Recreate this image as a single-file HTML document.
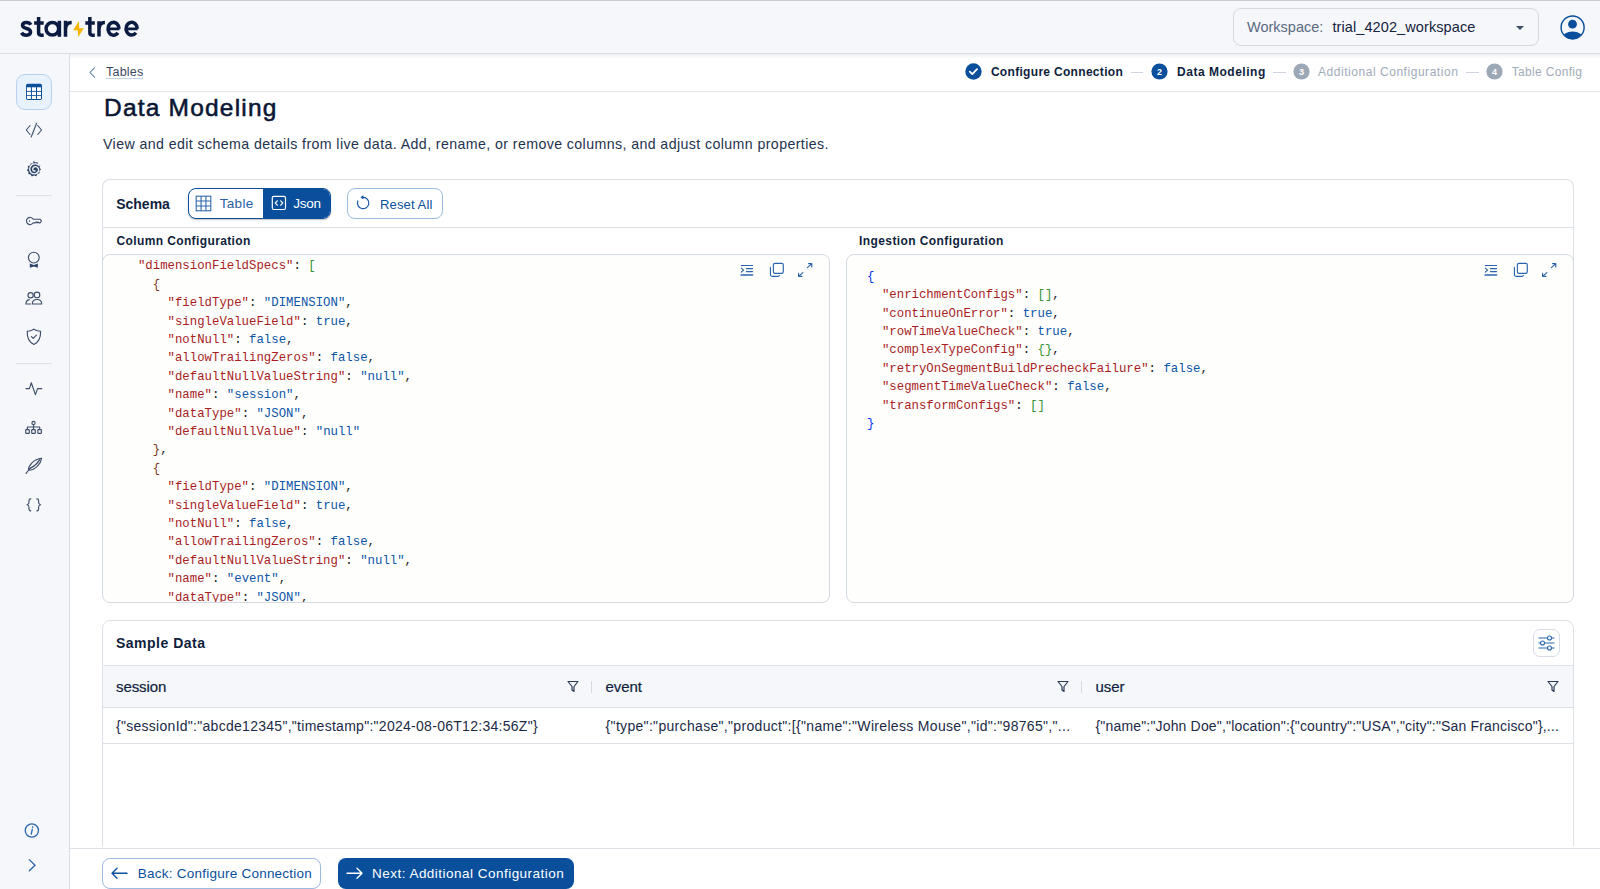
<!DOCTYPE html>
<html><head><meta charset="utf-8">
<style>
*{box-sizing:border-box;margin:0;padding:0}
html,body{width:1600px;height:889px;overflow:hidden;background:#fff;font-family:"Liberation Sans",sans-serif;color:#0f1e3d}
.a{position:absolute}
.t{position:absolute;white-space:nowrap;line-height:1}
.ic{position:absolute;fill:none;stroke:#3d4b68;stroke-width:1.3;stroke-linecap:round;stroke-linejoin:round}
.k{color:#a91d1d}.s{color:#0d56a8}.b1{color:#0431fa}.b2{color:#319331}.b3{color:#7b3814}
.code{position:absolute;font-family:"Liberation Mono",monospace;font-size:12.35px;line-height:18.4px;white-space:pre;color:#1a1a1a}
</style></head>
<body>
<div class="a" style="left:0;top:0;width:1600px;height:1px;background:#c9cbce"></div>
<div class="a" style="left:0;top:1px;width:1600px;height:53px;background:#f5f7fa;border-bottom:1px solid #d8dee6"></div>
<div class="a" style="left:0;top:54px;width:70px;height:835px;background:#f5f7fa;border-right:1px solid #d9dee4"></div>
<div class="a" style="left:70px;top:54px;width:1530px;height:5px;background:linear-gradient(#eef0f3,#fff)"></div>
<div class="a" style="left:70px;top:91px;width:1530px;height:1px;background:#e3e7ec"></div>
<svg class="a" style="left:0;top:0" width="160" height="54" viewBox="0 0 160 54">
<g fill="none" stroke="#0b1b42" stroke-width="3.5">
<path d="M30.8 24.8 C30 23.1 28.4 22.45 26.4 22.45 C24 22.45 22.55 23.6 22.55 25.3 C22.55 27.3 24.4 28 26.5 28.5 C28.8 29 30.55 29.8 30.55 32.1 C30.55 34 28.8 35.15 26.4 35.15 C24.1 35.15 22.5 34.3 21.5 32.7"/>
<path d="M38.6 17.1 V32.6 Q38.6 35.15 41.1 35.15 H43.7 M34.1 23 H43.7"/>
<circle cx="52.4" cy="28.8" r="6.3"/>
<path d="M59.4 20.8 V36.8"/>
<path d="M65.5 36.8 V20.8 M65.5 29.5 C65.5 24.6 67.6 22.45 71.7 22.45"/>
<path d="M89.85 16.9 V32.6 Q89.85 35.15 92.3 35.15 H94.8 M85.3 23 H94.8"/>
<path d="M99 36.5 V21.2 M99 29.5 C99 24.7 100.9 22.6 104.9 22.6"/>
<path d="M119.05 28.8 A5.5 6.4 0 1 0 117.84 32.8" />
<path d="M137.25 28.8 A5.6 6.4 0 1 0 135.95 32.8" />
</g>
<path d="M107.5 28.9 H119.5 M125.5 28.9 H137.6" stroke="#0b1b42" stroke-width="2.6"/>
<polygon points="78.8,21 73.2,30.2 77.6,30.2 78.2,37 83.8,28.2 79.3,28.2" fill="#f7b500"/>
</svg>
<div class="a" style="left:1232.5px;top:8px;width:306.5px;height:38px;border:1px solid #d3dae2;border-radius:8px;background:#f5f7fa"></div>
<div class="t" style="left:1247.00px;top:20.33px;font-size:14.5px;color:#5b6a82;letter-spacing:0px;">Workspace:</div>
<div class="t" style="left:1332.40px;top:20.33px;font-size:14.5px;color:#16223d;letter-spacing:0.1px;">trial_4202_workspace</div>
<svg class="a" style="left:1514px;top:24px" width="12" height="8"><path d="M2 2 L10 2 L6 6 Z" fill="#3d4b68"/></svg>
<svg class="a" style="left:1559px;top:14px" width="27" height="27" viewBox="0 0 27 27">
<defs><clipPath id="cc"><circle cx="13.5" cy="13.5" r="11.6"/></clipPath></defs>
<circle cx="13.6" cy="13.4" r="11.5" fill="none" stroke="#0a4f9c" stroke-width="1.45"/>
<circle cx="13.5" cy="10.2" r="4.4" fill="#0a4f9c"/>
<ellipse cx="13.6" cy="23.8" rx="10.5" ry="6.2" fill="#0a4f9c" clip-path="url(#cc)"/>
</svg>
<div class="a" style="left:16px;top:74px;width:36px;height:36px;border:1px solid #b8d2ef;border-radius:9px;background:#e8f2fd"></div>
<svg class="a" style="left:0;top:0" width="70" height="889" viewBox="0 0 70 889">
<g>
<rect x="26" y="83.8" width="16" height="16.1" rx="1.7" fill="#0a4f9c"/>
<g fill="#fff"><rect x="26.9" y="87.3" width="4.0" height="3.6"/><rect x="31.9" y="87.3" width="4.1" height="3.6"/><rect x="37.0" y="87.3" width="4.0" height="3.6"/><rect x="26.9" y="91.8" width="4.0" height="3.3"/><rect x="31.9" y="91.8" width="4.1" height="3.3"/><rect x="37.0" y="91.8" width="4.0" height="3.3"/><rect x="26.9" y="95.9" width="4.0" height="3.1"/><rect x="31.9" y="95.9" width="4.1" height="3.1"/><rect x="37.0" y="95.9" width="4.0" height="3.1"/></g></g>
<g fill="none" stroke="#44536f" stroke-width="1.15" stroke-linecap="round" stroke-linejoin="round">
<path d="M30 125.5 L26.3 130 L30 134.5 M37.8 125.5 L41.5 130 L37.8 134.5 M36.6 123.2 L31.2 137"/>
</g>
<path d="M33.6 160.8 L35.3 162.6 L37.6 162.2 L38.2 164.4 L40.3 165.3 L39.6 167.6 L41 169.4 L39.3 171 L39.6 173.3 L37.4 174 L36.3 176.2 L34 175.6 L31.8 176.6 L30.6 174.6 L28.3 174.1 L28.6 171.8 L26.8 170.2 L28.3 168.4 L27.8 166.1 L30 165.4 L30.9 163.2 L33.1 163.5 Z" fill="#2d4569"/>
<path d="M39.2 165.6 C37.4 163.6 34 163.2 31.7 164.9 C29.2 166.8 29 170.6 31.2 172.7 C33.4 174.6 37 174.2 38.3 171.4 C39.3 169.3 38.1 166.9 35.8 166.6 C33.9 166.4 32.4 168 32.8 169.7 C33.1 170.8 34.2 171.3 35.1 170.9" fill="none" stroke="#f5f7fa" stroke-width="1.35" stroke-linecap="round"/>
<rect x="16" y="195" width="36" height="1.2" fill="#dfe3e8"/>
<g fill="none" stroke="#3f4e6b" stroke-width="1.15" stroke-linecap="round" stroke-linejoin="round">
<path d="M33.2 219.2 A3.6 3.6 0 1 0 33.2 222.8 L35.3 222.8 L36.2 221.9 L37.1 222.8 L38 221.9 L38.9 222.8 L40 222.8 L41.5 221 L40 219.2 Z"/>
<circle cx="33.8" cy="257.6" r="5.4"/>
<circle cx="30.6" cy="295.2" r="2.6"/><circle cx="37" cy="294.9" r="2.8"/>
<path d="M29.3 299.6 C27.3 300 26 301.6 26 304 H30.6 M32.3 304 C32.3 301.2 34.3 299.5 37 299.5 C39.7 299.5 41.7 301.2 41.7 304 Z"/>
<path d="M33.9 329.2 C36.2 330.6 38.4 331.2 40.6 331.2 C40.8 337.5 38.6 342.2 33.9 344.5 C29.2 342.2 27 337.5 27.2 331.2 C29.4 331.2 31.6 330.6 33.9 329.2 Z"/>
<path d="M31.4 336.6 L33.2 338.3 L36.4 335.1"/>
</g>
<path d="M29.8 263.6 L33.8 265 L37.9 263.6 L37.9 267.8 L33.8 266.4 L29.8 267.8 Z" fill="#2d4569"/>
<circle cx="29.5" cy="221" r="0.75" fill="#3f4e6b"/>
<rect x="16" y="363" width="36" height="1.2" fill="#dfe3e8"/>
<g fill="none" stroke="#3f4e6b" stroke-width="1.15" stroke-linecap="round" stroke-linejoin="round">
<path d="M26 388.6 H29.4 L31.3 382.8 L35.4 394.6 L37.6 388.6 H41.8"/>
<circle cx="33.5" cy="422.9" r="1.6"/>
<path d="M33.5 424.5 V429.5 M27.4 429.4 V427 H39.7 V429.4"/>
<rect x="25.7" y="429.6" width="3.6" height="3.8" rx=".6"/><rect x="31.7" y="429.6" width="3.6" height="3.8" rx=".6"/><rect x="37.8" y="429.6" width="3.6" height="3.8" rx=".6"/>
<path d="M26 473.3 L30.8 467.5 M28.5 470.3 C28.3 465.5 33.5 459.2 41.6 458.2 C41 463.5 35.5 469.8 28.5 470.3 Z M30.5 468.3 C34.5 466.2 37.8 462.8 39.8 459.6"/>
<path d="M30.8 498.8 C28.8 498.8 29 500.3 29 502.3 C29 503.8 28.4 504.6 27 504.8 C28.4 505 29 505.8 29 507.3 C29 509.3 28.8 510.8 30.8 510.8 M36.8 498.8 C38.8 498.8 38.6 500.3 38.6 502.3 C38.6 503.8 39.2 504.6 40.6 504.8 C39.2 505 38.6 505.8 38.6 507.3 C38.6 509.3 38.8 510.8 36.8 510.8"/>
</g>
<g fill="none" stroke="#2a65ad" stroke-width="1.3" stroke-linecap="round" stroke-linejoin="round">
<circle cx="31.85" cy="830.5" r="6.6"/>
<path d="M32.3 829.2 L31.3 834"/>
<path d="M29.3 859.6 L35 865.2 L29.3 870.8"/>
</g>
<circle cx="32.7" cy="827" r="0.85" fill="#2a65ad"/>
</svg>
<svg class="ic" style="left:86px;top:66px" width="12" height="13" viewBox="0 0 12 13"><path d="M8.5 1.9 L3.9 6.5 L8.5 11.1" stroke="#5b79a6" stroke-width="1.05"/></svg>
<div class="t" style="left:106.00px;top:65.92px;font-size:12.5px;color:#3b4864;letter-spacing:0.22px;">Tables</div>
<div class="a" style="left:106px;top:77.5px;width:37px;height:1.3px;background:#c3d5ea"></div>
<svg class="a" style="left:964.8px;top:63.3px" width="17" height="17" viewBox="0 0 17 17"><circle cx="8.5" cy="8.5" r="8.2" fill="#0a4f9c"/><path d="M4.8 8.7 L7.3 11.1 L12 6.1" fill="none" stroke="#fff" stroke-width="1.8" stroke-linecap="round" stroke-linejoin="round"/></svg>
<div class="t" style="left:990.90px;top:66.24px;font-size:12px;color:#0f1e3d;font-weight:bold;letter-spacing:0.31px;">Configure Connection</div>
<div class="a" style="left:1131px;top:72px;width:12px;height:1px;background:#cdd4dd"></div>
<svg class="a" style="left:1151px;top:63.1px" width="17" height="17" viewBox="0 0 17 17"><circle cx="8.5" cy="8.5" r="8.1" fill="#0a4f9c"/><text x="8.5" y="11.8" font-family="Liberation Sans" font-size="9" font-weight="bold" fill="#fff" text-anchor="middle">2</text></svg>
<div class="t" style="left:1177.10px;top:66.24px;font-size:12px;color:#0f1e3d;font-weight:bold;letter-spacing:0.51px;">Data Modeling</div>
<div class="a" style="left:1273px;top:72px;width:13px;height:1px;background:#cdd4dd"></div>
<svg class="a" style="left:1293px;top:63.1px" width="17" height="17" viewBox="0 0 17 17"><circle cx="8.5" cy="8.5" r="8.1" fill="#9da8b7"/><text x="8.5" y="11.8" font-family="Liberation Sans" font-size="9" font-weight="bold" fill="#fff" text-anchor="middle">3</text></svg>
<div class="t" style="left:1318.00px;top:66.24px;font-size:12px;color:#a1abb9;letter-spacing:0.54px;">Additional Configuration</div>
<div class="a" style="left:1466px;top:72px;width:12.5px;height:1px;background:#cdd4dd"></div>
<svg class="a" style="left:1485.8px;top:63.1px" width="17" height="17" viewBox="0 0 17 17"><circle cx="8.5" cy="8.5" r="8.1" fill="#9da8b7"/><text x="8.5" y="11.8" font-family="Liberation Sans" font-size="9" font-weight="bold" fill="#fff" text-anchor="middle">4</text></svg>
<div class="t" style="left:1511.70px;top:66.24px;font-size:12px;color:#a1abb9;letter-spacing:0.33px;">Table Config</div>
<div class="t" style="left:104.00px;top:96.16px;font-size:24.5px;color:#0a1633;letter-spacing:1.2px;-webkit-text-stroke:0.55px #0a1633;">Data Modeling</div>
<div class="t" style="left:103.00px;top:137.28px;font-size:14.2px;color:#24324d;letter-spacing:0.4px;">View and edit schema details from live data. Add, rename, or remove columns, and adjust column properties.</div>
<div class="a" style="left:102px;top:179px;width:1472px;height:400px;border:1px solid #dbe1e7;border-bottom:none;border-radius:8px 8px 0 0;background:#fff"></div>
<div class="a" style="left:103px;top:227px;width:1470px;height:1px;background:#dbe1e7"></div>
<div class="t" style="left:116.20px;top:197.05px;font-size:14px;color:#0f1e3d;font-weight:bold;letter-spacing:0px;">Schema</div>
<div class="a" style="left:187.5px;top:188px;width:143.5px;height:31px;border:1px solid #0a4f9c;border-radius:8px;background:#fff;overflow:hidden;box-shadow:0 1px 1.5px rgba(0,0,0,.25)">
<div class="a" style="left:74px;top:0;width:70px;height:31px;background:#0a4f9c"></div></div>
<svg class="a" style="left:195px;top:195px" width="17" height="17" viewBox="0 0 17 17"><g fill="none" stroke="#2f67ad" stroke-width="1.1"><rect x="1.2" y="1.2" width="14.6" height="14.6"/><path d="M6.07 1.2 V15.8 M10.93 1.2 V15.8 M1.2 6.07 H15.8 M1.2 10.93 H15.8"/></g></svg>
<svg class="a" style="left:271px;top:195px" width="16" height="16" viewBox="0 0 16 16"><g fill="none" stroke="#fff" stroke-width="1.2" stroke-linecap="round" stroke-linejoin="round"><rect x="1.3" y="1.3" width="13.2" height="13.2" rx="1.5"/><path d="M6.3 5.8 L4.3 8 L6.3 10.2 M9.7 5.8 L11.7 8 L9.7 10.2"/></g></svg>
<div class="t" style="left:219.75px;top:196.77px;font-size:13.5px;color:#2b5fa2;letter-spacing:0.3px;">Table</div>
<div class="t" style="left:293.20px;top:196.77px;font-size:13.5px;color:#fff;letter-spacing:-0.2px;">Json</div>
<div class="a" style="left:347px;top:187.5px;width:96px;height:31.5px;border:1px solid #9dbbe0;border-radius:8px;background:#fff"></div>
<svg class="a" style="left:355px;top:194px" width="16" height="17" viewBox="0 0 16 17"><path d="M8.3 3.3 A5.7 5.7 0 1 1 2.78 6.96" fill="none" stroke="#1d5ba6" stroke-width="1.25" stroke-linecap="round"/><path d="M5.4 3.3 L8.4 1.2 L8.4 5.4 Z" fill="#0a4f9c"/></svg>
<div class="t" style="left:380.10px;top:197.50px;font-size:13px;color:#0a4f9c;letter-spacing:0.11px;">Reset All</div>
<div class="t" style="left:116.50px;top:234.84px;font-size:12px;color:#0f1e3d;font-weight:bold;letter-spacing:0.38px;">Column Configuration</div>
<div class="t" style="left:859.00px;top:234.84px;font-size:12px;color:#0f1e3d;font-weight:bold;letter-spacing:0.41px;">Ingestion Configuration</div>
<div class="a" style="left:102px;top:254px;width:728px;height:349px;border:1px solid #d3dae3;border-radius:8px;background:#fefefd;overflow:hidden">
<div class="code" style="left:20.1px;top:2.3px"><span class="k">  "dimensionFieldSpecs"</span>: <span class="b2">[</span>
    <span class="b3">{</span>
      <span class="k">"fieldType"</span>: <span class="s">"DIMENSION"</span>,
      <span class="k">"singleValueField"</span>: <span class="s">true</span>,
      <span class="k">"notNull"</span>: <span class="s">false</span>,
      <span class="k">"allowTrailingZeros"</span>: <span class="s">false</span>,
      <span class="k">"defaultNullValueString"</span>: <span class="s">"null"</span>,
      <span class="k">"name"</span>: <span class="s">"session"</span>,
      <span class="k">"dataType"</span>: <span class="s">"JSON"</span>,
      <span class="k">"defaultNullValue"</span>: <span class="s">"null"</span>
    <span class="b3">}</span>,
    <span class="b3">{</span>
      <span class="k">"fieldType"</span>: <span class="s">"DIMENSION"</span>,
      <span class="k">"singleValueField"</span>: <span class="s">true</span>,
      <span class="k">"notNull"</span>: <span class="s">false</span>,
      <span class="k">"allowTrailingZeros"</span>: <span class="s">false</span>,
      <span class="k">"defaultNullValueString"</span>: <span class="s">"null"</span>,
      <span class="k">"name"</span>: <span class="s">"event"</span>,
      <span class="k">"dataType"</span>: <span class="s">"JSON"</span>,</div></div>
<svg class="a" style="left:735px;top:258px" width="80" height="24" viewBox="0 0 80 24"><g fill="none" stroke="#2a65ad" stroke-width="1.15" stroke-linecap="round" stroke-linejoin="round">
<path d="M6.2 7.5 H17.6 M11.4 10.6 H17.6 M11.4 13.6 H17.6"/><path d="M6.2 17 H17.6" stroke-width="1.6"/><path d="M6.3 10.1 L8.6 12.1 L6.3 14.1"/>
<rect x="38.4" y="5.4" width="9.9" height="9.9" rx="1.6"/><path d="M35.4 9.3 V16.6 Q35.4 18.4 37.2 18.4 H42.6 Q44.4 18.4 44.4 17.2"/>
<path d="M72.4 9.7 L76.8 5.6 M73.5 5.6 H76.8 V8.9 M67.9 14.6 L63.6 18.4 M63.6 15.2 V18.4 H66.9"/>
</g></svg>
<div class="a" style="left:846px;top:254px;width:728px;height:349px;border:1px solid #d3dae3;border-radius:8px;background:#fefefd;overflow:hidden">
<div class="code" style="left:20.1px;top:12.8px"><span class="b1">{</span>
  <span class="k">"enrichmentConfigs"</span>: <span class="b2">[]</span>,
  <span class="k">"continueOnError"</span>: <span class="s">true</span>,
  <span class="k">"rowTimeValueCheck"</span>: <span class="s">true</span>,
  <span class="k">"complexTypeConfig"</span>: <span class="b2">{}</span>,
  <span class="k">"retryOnSegmentBuildPrecheckFailure"</span>: <span class="s">false</span>,
  <span class="k">"segmentTimeValueCheck"</span>: <span class="s">false</span>,
  <span class="k">"transformConfigs"</span>: <span class="b2">[]</span>
<span class="b1">}</span></div></div>
<svg class="a" style="left:1479px;top:258px" width="80" height="24" viewBox="0 0 80 24"><g fill="none" stroke="#2a65ad" stroke-width="1.15" stroke-linecap="round" stroke-linejoin="round">
<path d="M6.2 7.5 H17.6 M11.4 10.6 H17.6 M11.4 13.6 H17.6"/><path d="M6.2 17 H17.6" stroke-width="1.6"/><path d="M6.3 10.1 L8.6 12.1 L6.3 14.1"/>
<rect x="38.4" y="5.4" width="9.9" height="9.9" rx="1.6"/><path d="M35.4 9.3 V16.6 Q35.4 18.4 37.2 18.4 H42.6 Q44.4 18.4 44.4 17.2"/>
<path d="M72.4 9.7 L76.8 5.6 M73.5 5.6 H76.8 V8.9 M67.9 14.6 L63.6 18.4 M63.6 15.2 V18.4 H66.9"/>
</g></svg>
<div class="a" style="left:102px;top:620px;width:1472px;height:300px;border:1px solid #dbe1e7;border-radius:8px;background:#fff;overflow:hidden">
<div class="a" style="left:0;top:44.2px;width:1470px;height:42.8px;background:#f5f7fa;border-top:1px solid #dbe1e7;border-bottom:1px solid #dbe1e7"></div>
<div class="a" style="left:0;top:121.8px;width:1470px;height:1px;background:#dbe1e7"></div>
</div>
<div class="t" style="left:116.00px;top:636.45px;font-size:14px;color:#0f1e3d;font-weight:bold;letter-spacing:0.5px;">Sample Data</div>
<div class="a" style="left:1532.5px;top:628.5px;width:27px;height:28px;border:1px solid #d6dde6;border-radius:7px;background:#fff"></div>
<svg class="a" style="left:1537px;top:634px" width="19" height="18" viewBox="0 0 19 18"><g fill="none" stroke="#2a65ad" stroke-width="1.1"><path d="M1.5 4 H10.5 M14.5 4 H17.5 M1.5 9 H3.5 M7.5 9 H17.5 M1.5 14 H10.5 M14.5 14 H17.5"/><circle cx="12.5" cy="4" r="2"/><circle cx="5.5" cy="9" r="2"/><circle cx="12.5" cy="14" r="2"/></g></svg>
<div class="t" style="left:116.00px;top:679.30px;font-size:15px;color:#0f1e3d;letter-spacing:-0.1px;-webkit-text-stroke:0.2px #0f1e3d;">session</div>
<div class="t" style="left:605.60px;top:679.30px;font-size:15px;color:#0f1e3d;letter-spacing:-0.1px;-webkit-text-stroke:0.2px #0f1e3d;">event</div>
<div class="t" style="left:1095.50px;top:679.30px;font-size:15px;color:#0f1e3d;letter-spacing:-0.1px;-webkit-text-stroke:0.2px #0f1e3d;">user</div>
<svg class="a" style="left:567px;top:680px" width="12" height="13" viewBox="0 0 12 13"><path d="M1 1.5 H11 L7 6.5 V11.5 L5 10 V6.5 Z" fill="none" stroke="#2b3a57" stroke-width="1.2" stroke-linejoin="round"/></svg>
<svg class="a" style="left:1057px;top:680px" width="12" height="13" viewBox="0 0 12 13"><path d="M1 1.5 H11 L7 6.5 V11.5 L5 10 V6.5 Z" fill="none" stroke="#2b3a57" stroke-width="1.2" stroke-linejoin="round"/></svg>
<svg class="a" style="left:1547px;top:680px" width="12" height="13" viewBox="0 0 12 13"><path d="M1 1.5 H11 L7 6.5 V11.5 L5 10 V6.5 Z" fill="none" stroke="#2b3a57" stroke-width="1.2" stroke-linejoin="round"/></svg>
<div class="a" style="left:590.5px;top:680.5px;width:1.2px;height:12px;background:#d3d9e0"></div>
<div class="a" style="left:1080.5px;top:680.5px;width:1.2px;height:12px;background:#d3d9e0"></div>
<div class="t" style="left:116.00px;top:719.05px;font-size:14px;color:#1c2a47;letter-spacing:0.28px;">{"sessionId":"abcde12345","timestamp":"2024-08-06T12:34:56Z"}</div>
<div class="t" style="left:605.60px;top:719.05px;font-size:14px;color:#1c2a47;letter-spacing:0.32px;">{"type":"purchase","product":[{"name":"Wireless Mouse","id":"98765","...</div>
<div class="t" style="left:1095.50px;top:719.05px;font-size:14px;color:#1c2a47;letter-spacing:0.17px;">{"name":"John Doe","location":{"country":"USA","city":"San Francisco"},...</div>
<div class="a" style="left:70px;top:846px;width:1530px;height:43px;background:#fff;border-top:2px solid #fff"></div>
<div class="a" style="left:70px;top:848px;width:1530px;height:1px;background:#dbe1e7"></div>
<div class="a" style="left:102px;top:858px;width:219px;height:31px;border:1px solid #9dbbe0;border-radius:8px;background:#fff"></div>
<svg class="a" style="left:110px;top:866px" width="19" height="15" viewBox="0 0 19 15"><g fill="none" stroke="#0a4f9c" stroke-width="1.4" stroke-linecap="round" stroke-linejoin="round"><path d="M17 7.3 H2 M7 2.3 L2 7.3 L7 12.3"/></g></svg>
<div class="t" style="left:137.75px;top:867.07px;font-size:13.5px;color:#0a4f9c;letter-spacing:0.24px;">Back: Configure Connection</div>
<div class="a" style="left:338px;top:858px;width:236px;height:31px;border-radius:8px;background:#0a4f9c"></div>
<svg class="a" style="left:345px;top:866px" width="19" height="15" viewBox="0 0 19 15"><g fill="none" stroke="#fff" stroke-width="1.4" stroke-linecap="round" stroke-linejoin="round"><path d="M2 7.3 H17 M12 2.3 L17 7.3 L12 12.3"/></g></svg>
<div class="t" style="left:372.00px;top:867.07px;font-size:13.5px;color:#fff;letter-spacing:0.48px;">Next: Additional Configuration</div>
</body></html>
